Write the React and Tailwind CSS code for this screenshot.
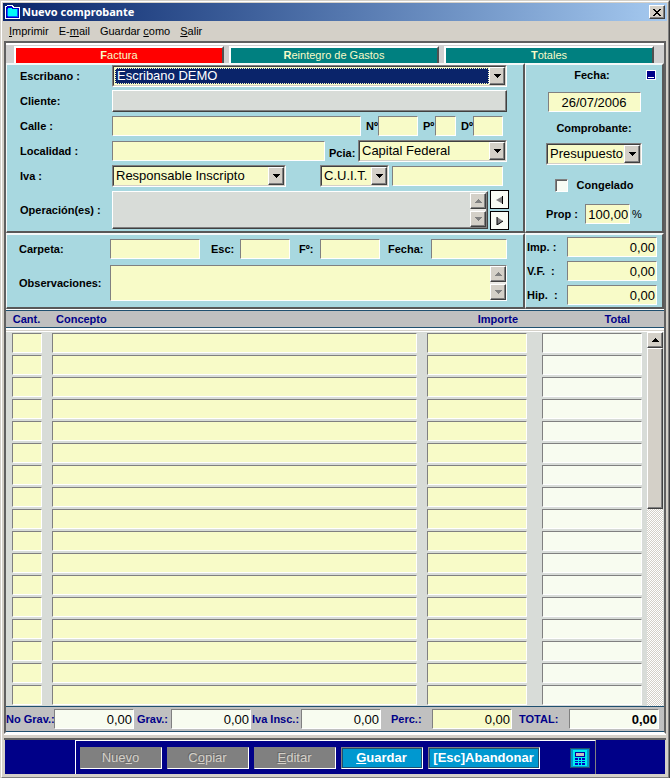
import clsx from "clsx";

const sunken =
  "border border-t-[#808080] border-l-[#808080] border-b-white border-r-white rounded-none outline-none";
const raised =
  "border border-t-white border-l-white border-b-[#404040] border-r-[#404040] shadow-[inset_-1px_-1px_0_#808080]";

const Field = ({ className, ...props }) => (
  <input
    type="text"
    className={clsx(
      "block h-[20px] min-w-0 px-px text-[13px] leading-[16px] text-black",
      sunken,
      className
    )}
    {...props}
  />
);

const Label = ({ className, ...props }) => (
  <label
    className={clsx("whitespace-nowrap text-[11px] leading-[14px] font-bold", className)}
    {...props}
  />
);

const Arrow = ({ up, disabled }) => (
  <svg width="7" height="4" viewBox="0 0 7 4" shapeRendering="crispEdges">
    <path d={up ? "M3 0h1v1h1v1h1v1h1v1H0V3h1V2h1V1h1z" : "M0 0h7v1H6v1H5v1H4v1H3V3H2V2H1V1H0z"} fill={disabled ? "#808080" : "#000"} />
  </svg>
);

const Select = ({ id, label, value, className, active }) => (
  <div
    className={clsx(
      "relative h-[22px] border border-t-[#808080] border-l-[#808080] border-b-white border-r-white",
      className
    )}
  >
    <div className="h-full border border-t-[#404040] border-l-[#404040] border-b-[#d4d0c8] border-r-[#d4d0c8] bg-[#f8fbc8] p-px pr-[16px]">
      <select
        id={id}
        aria-label={label}
        className={clsx(
          "block h-full w-full appearance-none rounded-none pl-px text-[13px] leading-[14px] outline-none",
          active
            ? "border border-dotted border-[#f8fbc8] bg-[#0a246a] text-white"
            : "bg-[#f8fbc8] text-black"
        )}
      >
        <option>{value}</option>
      </select>
    </div>
    <span
      className={clsx(
        "pointer-events-none absolute top-px right-px bottom-px flex w-[16px] items-center justify-center bg-[#d4d0c8]",
        raised
      )}
    >
      <Arrow />
    </span>
  </div>
);

const Spinner = () => (
  <div className="flex w-[16px] flex-col justify-between bg-[#ecebe7]">
    <button aria-label="Subir" className={clsx("flex h-[16px] items-center justify-center bg-[#d4d0c8]", raised)}>
      <Arrow up disabled />
    </button>
    <button aria-label="Bajar" className={clsx("flex h-[16px] items-center justify-center bg-[#d4d0c8]", raised)}>
      <Arrow disabled />
    </button>
  </div>
);

const Panel = ({ className, children }) => (
  <div
    className={clsx(
      "border-t-2 border-r-2 border-b-2 border-l border-t-[#f4f8f8] border-l-[#f4f8f8] border-r-[#585858] border-b-[#585858] bg-[#a8d8e0]",
      className
    )}
  >
    {children}
  </div>
);

const Tab = ({ first, rest, active }) => (
  <button
    className={clsx(
      "h-[17px] border-t-2 border-r-2 border-l-2 border-t-white border-r-[#505050] border-l-white text-center text-[11px] leading-[15px] text-[#f8fbc8]",
      active ? "bg-[#ff0000]" : "bg-[#008080]"
    )}
  >
    <b>{first}</b>
    {rest}
  </button>
);

const menu = [
  ["", "I", "mprimir"],
  ["E-", "m", "ail"],
  ["Guardar ", "c", "omo"],
  ["", "S", "alir"],
];

const amounts = ["Imp. :", "V.F.  :", "Hip.  :"];

const rows = Array.from({ length: 17 }, (_, i) => i);

const ActionButton = ({ before, letter, after, disabled, className }) => (
  <button
    disabled={disabled}
    className={clsx(
      "h-[22px] text-[13px] leading-[18px] border",
      disabled
        ? "w-[82px] border-t-[#808080] border-l-[#808080] border-r-white border-b-white bg-[#808080] text-[#d4d0c8] [text-shadow:-1px_-1px_0_#686868]"
        : "border-t-[#808080] border-l-[#808080] border-r-white border-b-white bg-[#0098d0] font-bold text-white shadow-[inset_-1px_-1px_0_#205070,inset_1px_1px_0_#205070]",
      className
    )}
  >
    {before}
    {letter && <span className="underline">{letter}</span>}
    {after}
  </button>
);

const TitleBar = () => (
  <header className="flex h-[18px] items-center bg-linear-to-r from-[#0a246a] to-[#a6caf0] pr-[2px] pl-[2px]">
    <svg width="16" height="14" viewBox="0 0 16 14" shapeRendering="crispEdges" className="mr-px">
      <path d="M0 1h2V0h6v1h1v1h6v12H0z" fill="#fff" />
      <path d="M1 2h1V1h5v1h1v1h6v10H1z" fill="#0000c8" />
      <path d="M3 3h4v1h5v7H3z" fill="#00f8f8" />
      <path d="M2 4h1v7H2zM12 4h1v8h-1zM3 11h9v1H3z" fill="#0060ff" />
    </svg>
    <h1 className="flex-1 font-['Noto_Sans'] text-[11px] leading-[16px] font-bold text-white">
      Nuevo comprobante
    </h1>
    <button aria-label="Cerrar" className={clsx("flex h-[14px] w-[16px] items-center justify-center bg-[#d4d0c8]", raised)}>
      <svg width="8" height="7" viewBox="0 0 8 7" shapeRendering="crispEdges">
        <path d="M0 0h2v1h1v1h2V1h1V0h2v1H7v1H6v1H5v1h1v1h1v1h1v1H6V6H5V5H3v1H2v1H0V6h1V5h1V4h1V3H2V2H1V1H0z" />
      </svg>
    </button>
  </header>
);

const Customer = () => (
  <Panel className="flex flex-col gap-[3px] pr-[16px] pl-[13px]">
    <div className="flex items-center">
      <Label htmlFor="escribano" className="w-[92px]">Escribano :</Label>
      <Select id="escribano" value="Escribano DEMO" active className="flex-1" />
    </div>
    <div className="flex items-center">
      <Label htmlFor="cliente" className="w-[92px]">Cliente:</Label>
      <input id="cliente" readOnly className={clsx("h-[22px] min-w-0 flex-1 bg-[#d8dcd8] outline-none", raised)} />
    </div>
    <div className="flex h-[22px] items-center pr-[4px]">
      <Label htmlFor="calle" className="w-[92px]">Calle :</Label>
      <Field id="calle" className="flex-1 bg-[#f8fbc8]" />
      <Label htmlFor="numero" className="w-[17px] pl-[5px]">Nº</Label>
      <Field id="numero" className="w-[40px] bg-[#f8fbc8]" />
      <Label htmlFor="piso" className="w-[17px] pl-[5px]">Pº</Label>
      <Field id="piso" className="w-[21px] bg-[#f8fbc8]" />
      <Label htmlFor="depto" className="w-[17px] pl-[5px]">Dº</Label>
      <Field id="depto" className="w-[30px] bg-[#f8fbc8]" />
    </div>
    <div className="flex items-center">
      <Label htmlFor="localidad" className="w-[92px]">Localidad :</Label>
      <Field id="localidad" className="flex-1 bg-[#f8fbc8]" />
      <Label htmlFor="pcia" className="w-[33px] pt-[4px] pl-[4px]">Pcia:</Label>
      <Select id="pcia" value="Capital Federal" className="w-[149px]" />
    </div>
    <div className="flex items-center pr-[4px]">
      <Label htmlFor="iva" className="w-[92px]">Iva :</Label>
      <Select id="iva" value="Responsable Inscripto" className="w-[174px]" />
      <Select label="Documento" value="C.U.I.T." className="ml-auto w-[69px]" />
      <Field aria-label="Número de documento" className="ml-[3px] w-[111px] bg-[#f8fbc8]" />
    </div>
    <div className="flex items-center">
      <Label htmlFor="operaciones" className="w-[92px]">Operación(es) :</Label>
      <div className={clsx("flex h-[38px] flex-1 bg-[#d8dcd8] p-px", raised)}>
        <textarea id="operaciones" readOnly className="block h-full min-w-0 flex-1 resize-none outline-none" />
        <Spinner />
      </div>
      <div className="-mr-[2px] ml-[2px] flex flex-col gap-[2px]">
        <button aria-label="Anterior" className="flex h-[19px] w-[19px] items-center justify-center border border-black bg-[#f8fcf4]">
          <svg width="8" height="8" viewBox="0 0 8 8"><path d="M7 0v8L0 4z" fill="#808080" /><path d="M6 0h1v8H6z" fill="#000" /></svg>
        </button>
        <button aria-label="Siguiente" className="flex h-[19px] w-[19px] items-center justify-center border border-black bg-[#f8fcf4]">
          <svg width="8" height="8" viewBox="0 0 8 8"><path d="M1 0v8l6-4z" fill="#808080" /><path d="M1 0v8l6-4" fill="none" stroke="#000" /></svg>
        </button>
      </div>
    </div>
  </Panel>
);

const Receipt = () => (
  <Panel className="flex flex-col items-center">
    <div className="flex w-full items-center pt-[3px] pr-[6px]">
      <Label htmlFor="fecha" className="flex-1 pl-[12px] text-center">Fecha:</Label>
      <button aria-label="Calendario" className="flex h-[10px] w-[10px] items-end justify-center border border-white bg-[#000088] pb-px">
        <span className="h-px w-[6px] bg-white" />
      </button>
    </div>
    <Field id="fecha" defaultValue="26/07/2006" className="mt-[10px] w-[93px] bg-[#f8fbc8] text-center" />
    <Label htmlFor="comprobante" className="mt-[9px]">Comprobante:</Label>
    <Select id="comprobante" value="Presupuesto" className="mt-[8px] w-[96px]" />
    <div className="mt-[13px] flex items-center gap-[9px]">
      <input
        id="congelado"
        type="checkbox"
        className="h-[13px] w-[13px] appearance-none border border-t-[#808080] border-r-white border-b-white border-l-[#808080] bg-[#f8fcf4] shadow-[inset_1px_1px_0_#606060]"
      />
      <Label htmlFor="congelado">Congelado</Label>
    </div>
    <div className="mt-[12px] flex items-center">
      <Label htmlFor="prop" className="w-[39px]">Prop :</Label>
      <Field id="prop" defaultValue="100,00" className="w-[45px] bg-[#f8fbc8] text-right" />
      <span className="pl-[2px] text-[11px] leading-[14px]">%</span>
    </div>
  </Panel>
);

const Folder = () => (
  <Panel className="flex flex-col gap-[6px] pt-[4px] pr-[16px] pl-[12px]">
    <div className="flex items-center">
      <Label htmlFor="carpeta" className="w-[91px]">Carpeta:</Label>
      <Field id="carpeta" className="flex-1 bg-[#f8fbc8]" />
      <Label htmlFor="esc" className="w-[40px] pl-[11px]">Esc:</Label>
      <Field id="esc" className="w-[50px] bg-[#f8fbc8]" />
      <Label htmlFor="folio" className="w-[30px] pl-[9px]">Fº:</Label>
      <Field id="folio" className="w-[60px] bg-[#f8fbc8]" />
      <Label htmlFor="fechaEsc" className="w-[51px] pl-[8px]">Fecha:</Label>
      <Field id="fechaEsc" className="w-[76px] bg-[#f8fbc8]" />
    </div>
    <div className="flex items-center">
      <Label htmlFor="observaciones" className="w-[91px]">Observaciones:</Label>
      <div className={clsx("flex h-[36px] flex-1 bg-[#f8fbc8]", sunken)}>
        <textarea id="observaciones" className="block h-full min-w-0 flex-1 resize-none outline-none" />
        <Spinner />
      </div>
    </div>
  </Panel>
);

const Amounts = () => (
  <Panel className="flex flex-col gap-1 pt-[2px] pr-[5px] pl-px">
    {amounts.map((name) => (
      <div key={name} className="flex items-center">
        <Label htmlFor={name} className="w-[40px] whitespace-pre">{name}</Label>
        <Field id={name} defaultValue="0,00" className="flex-1 bg-[#f8fbc8] text-right" />
      </div>
    ))}
  </Panel>
);

const heading = "h-[18px] border-y border-[#205070] bg-[#c0c0c0] p-0 text-[11px] leading-[16px] font-bold text-[#000088]";

const Items = () => (
  <table className="w-full table-fixed border-separate border-spacing-0 bg-[#d8dcd8]">
    <colgroup>
      <col className="w-[41px]" />
      <col />
      <col className="w-[112px]" />
      <col className="w-[112px]" />
      <col className="w-[18px]" />
    </colgroup>
    <thead>
      <tr>
        <th className={clsx(heading, "text-center")}>Cant.</th>
        <th className={clsx(heading, "pl-[9px] text-left")}>Concepto</th>
        <th className={clsx(heading, "pr-[16px] text-right")}>Importe</th>
        <th className={clsx(heading, "pr-[16px] text-right")}>Total</th>
        <td className={heading} />
      </tr>
      <tr>
        <td colSpan={5} className="h-[4px] border-t-2 border-b border-t-white border-b-white bg-[#d4d0c8] p-0" />
      </tr>
    </thead>
    <tbody>
      {rows.map((i) => (
        <tr key={i}>
          <td className="h-[22px] py-px pr-[5px] pl-[6px]">
            <Field aria-label="Cant." className="w-full bg-[#f8fbc8]" />
          </td>
          <td className="px-[5px] py-px">
            <Field aria-label="Concepto" className="w-full bg-[#f8fbc8]" />
          </td>
          <td className="py-px pr-[7px] pl-[5px]">
            <Field aria-label="Importe" className="w-full bg-[#f8fbc8]" />
          </td>
          <td className="py-px pr-[4px] pl-[8px]">
            <Field aria-label="Total" readOnly className="w-full bg-[#f8fcf0]" />
          </td>
          {i === 0 && (
            <td rowSpan={rows.length} className="p-0 px-px align-top">
              <div className="h-[374px] bg-[#d4d0c8] bg-[repeating-conic-gradient(#fff_0_25%,#d4d0c8_0_50%)] bg-size-[2px_2px]">
                <button aria-label="Subir" className={clsx("flex h-[16px] w-full items-center justify-center bg-[#d4d0c8]", raised)}>
                  <Arrow up />
                </button>
                <div className={clsx("h-[161px] bg-[#d4d0c8]", raised)} />
              </div>
            </td>
          )}
        </tr>
      ))}
    </tbody>
  </table>
);

const Totals = () => (
  <div className="flex h-[26px] items-center border-y border-[#205070] bg-[#c0c0c0] pr-[5px] text-[#000088]">
    <Label htmlFor="noGrav" className="w-[48px]">No Grav.:</Label>
    <Field id="noGrav" defaultValue="0,00" className="w-[80px] bg-[#f8fcf0] text-right" />
    <Label htmlFor="grav" className="w-[37px] pl-[3px]">Grav.:</Label>
    <Field id="grav" defaultValue="0,00" className="w-[80px] bg-[#f8fcf0] text-right" />
    <Label htmlFor="ivaInsc" className="w-[50px] pl-px">Iva Insc.:</Label>
    <Field id="ivaInsc" defaultValue="0,00" className="w-[80px] bg-[#f8fcf0] text-right" />
    <Label htmlFor="perc" className="w-[51px] pl-[10px]">Perc.:</Label>
    <Field id="perc" defaultValue="0,00" className="w-[80px] bg-[#f8fbc8] text-right" />
    <Label htmlFor="total" className="w-[57px] pl-[7px]">TOTAL:</Label>
    <Field id="total" defaultValue="0,00" className="flex-1 bg-[#f8fcf0] text-right font-bold" />
  </div>
);

const Actions = () => (
  <footer className="mx-[2px] mb-[2px] flex h-[34px] justify-center bg-[#000088]">
    <div className="flex w-[521px] items-center gap-[5px] border-t border-r border-l border-t-white border-r-[#808080] border-l-white pr-[5px] pl-[4px]">
      <ActionButton before="Nue" letter="v" after="o" disabled />
      <ActionButton before="C" letter="o" after="piar" disabled />
      <ActionButton letter="E" after="ditar" disabled />
      <ActionButton letter="G" after="uardar" className="w-[82px]" />
      <ActionButton before="[Esc]Abandonar" className="w-[112px]" />
      <button aria-label="Calculadora" className="ml-auto h-[20px] w-[20px] border border-[#205070] bg-[#0098d0]">
        <svg width="18" height="18" viewBox="0 0 18 18" shapeRendering="crispEdges">
          <path d="M2 1h14v16H2z" fill="#00f0f0" />
          <path d="M4 3h10v5H4z" fill="#0000a0" />
          <path d="M5 4h8v3H5z" fill="#c0c0c0" />
          <path d="M4 9h3v2H4zM8 9h2v2H8zM11 9h3v2h-3zM4 12h3v1H4zM8 12h2v1H8zM11 12h3v1h-3zM4 14h3v2H4zM8 14h2v2H8zM11 14h3v2h-3z" fill="#0000c0" />
        </svg>
      </button>
    </div>
  </footer>
);

const App = () => {
  return (
    <div className="border border-t-[#d4d0c8] border-r-[#404040] border-b-[#404040] border-l-[#d4d0c8] font-['Liberation_Sans',Arial,sans-serif] text-black">
      <div className="border border-t-white border-r-[#808080] border-b-[#808080] border-l-white bg-[#d4d0c8] p-px">
        <TitleBar />

        {/* Menu */}
        <nav className="flex h-[20px] items-center gap-[10px] pl-[6px]">
          {menu.map(([before, letter, after]) => (
            <button key={letter} className="whitespace-pre text-[11px] leading-[14px]">
              {before}
              <span className="underline">{letter}</span>
              {after}
            </button>
          ))}
        </nav>

        <main className="mx-px border-2 border-t-[#606060] border-r-[#606060] border-b-white border-l-[#606060]">
          <div className="grid grid-cols-3 gap-[5px] border-t-2 border-white bg-[#d0d0d0] pt-px pr-[10px] pl-[8px]">
            <Tab first="F" rest="actura" active />
            <Tab first="R" rest="eintegro de Gastos" />
            <Tab first="T" rest="otales" />
          </div>
          <div className="grid grid-cols-[minmax(0,1fr)_139px] grid-rows-[170px_76px] border-b border-white">
            <Customer />
            <Receipt />
            <Folder />
            <Amounts />
          </div>
          <Items />
          <Totals />
        </main>
        <div className="mx-px h-[6px] border-t border-b-2 border-t-white border-b-[#606060]" />
        <Actions />
      </div>
    </div>
  );
};

export default App;
